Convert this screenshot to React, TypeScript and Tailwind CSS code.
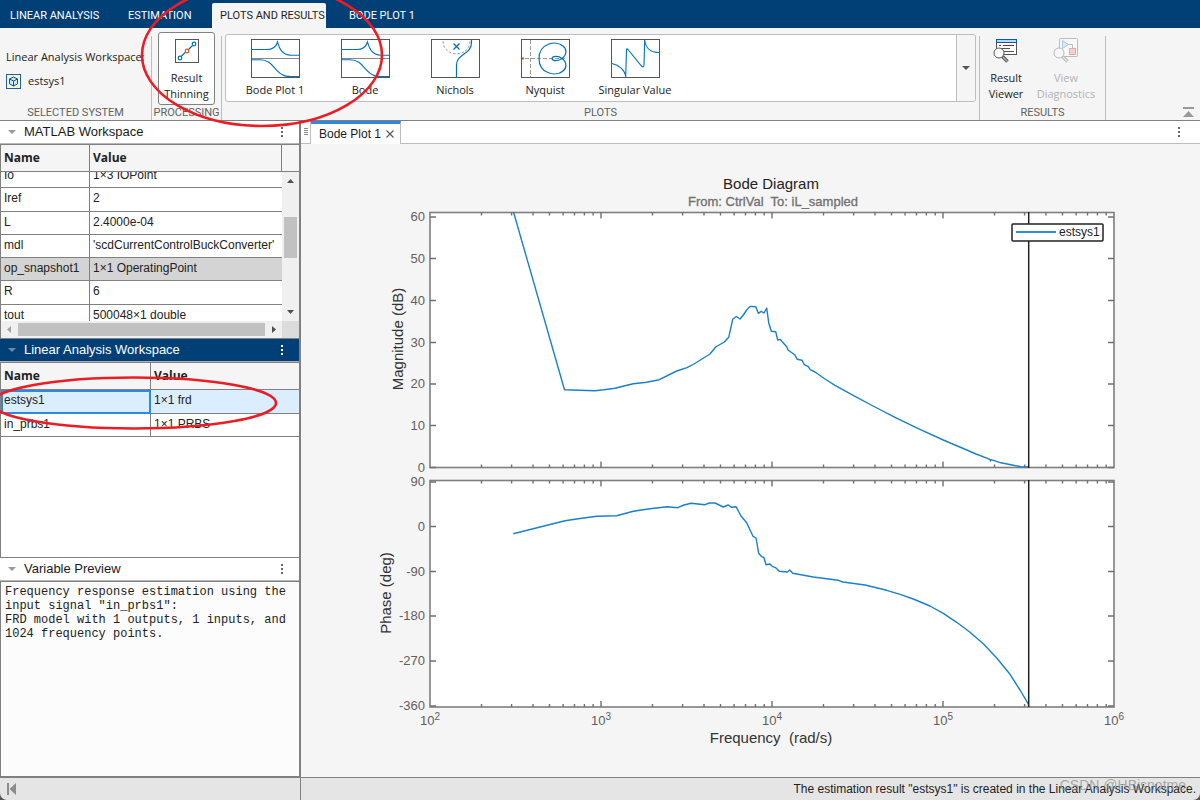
import React from "react";

const UI = "font-['Open_Sans','Noto_Sans',sans-serif]";
const CAPS = "font-['Roboto','Open_Sans',sans-serif]";
const BLUE = "#0072bd";

function ThinningIcon() {
  return (
    <svg width="24" height="24" viewBox="0 0 24 24" fill="none" aria-hidden="true">
      <rect x="0.5" y="0.5" width="23" height="23" fill="#fff" stroke="#555" />
      <path d="M6 17.5 L10.5 13.3 M13.5 10.5 L17.5 6.5" stroke={BLUE} strokeWidth="1.2" />
      <circle cx="5" cy="19" r="1.8" stroke={BLUE} strokeWidth="1.2" />
      <circle cx="12" cy="12" r="1.8" stroke="#d95319" strokeWidth="1.2" />
      <circle cx="19" cy="5" r="1.8" stroke={BLUE} strokeWidth="1.2" />
    </svg>
  );
}

function PlotFrame({ children }: { children: React.ReactNode }) {
  return (
    <svg width="49" height="39" viewBox="0 0 49 39" fill="none" aria-hidden="true">
      <rect x="0.5" y="0.5" width="48" height="38" fill="#fff" stroke="#555" />
      {children}
    </svg>
  );
}

function BodeIcon() {
  return (
    <PlotFrame>
      <path d="M1 19.5 H48" stroke="#888" />
      <path d="M1 10.5 H16 C21 10.5 25 8 26.5 3 C28 8 30 16 40 16.3 H48" stroke={BLUE} strokeWidth="1.1" />
      <path d="M1 20.8 H9 C22 21 22 31 32 36 C34 37.4 36 37.5 40 37.5 H48" stroke={BLUE} strokeWidth="1.1" />
    </PlotFrame>
  );
}

function NicholsIcon() {
  return (
    <PlotFrame>
      <path d="M12 2 C12 19 39 19 39 2" stroke="#999" strokeDasharray="2.5 1.8" />
      <path d="M22.5 4.5 L28.5 10.5 M28.5 4.5 L22.5 10.5" stroke={BLUE} strokeWidth="1.3" />
      <path d="M40.5 1 V4 C40.5 15 25.5 15 25.5 26 V38" stroke={BLUE} strokeWidth="1.2" />
    </PlotFrame>
  );
}

function NyquistIcon() {
  return (
    <PlotFrame>
      <path d="M9.5 1 V38" stroke="#999" strokeDasharray="4 2" />
      <path d="M4 19.5 H46" stroke="#999" strokeDasharray="4 2" />
      <path d="M1 19.5 H3" stroke="#d95319" strokeWidth="2" />
      <path
        d="M41 19.5 C38 17 31 16.5 31 19.5 C31 22.5 38 22 41 19.5 C46 16 46 10 42 7 C35 1 18 4 18 19.5 C18 35 35 38 42 32 C46 29 46 23 41 19.5"
        stroke={BLUE}
        strokeWidth="1.2"
      />
    </PlotFrame>
  );
}

function SingularIcon() {
  return (
    <PlotFrame>
      <path
        d="M1 24.5 C8 26 14 31 14.7 38 L15.5 11 Q15.6 9 17 10.5 L30.5 27 Q32.8 29 33 26 L33.7 1 C34.5 9 40 13.5 48 13.5"
        stroke={BLUE}
        strokeWidth="1.1"
      />
    </PlotFrame>
  );
}

function ResultViewerIcon() {
  return (
    <svg width="26" height="26" viewBox="0 0 26 26" fill="none" aria-hidden="true">
      <rect x="3.5" y="1.5" width="20" height="15" fill="#fff" stroke="#555" />
      <rect x="3.5" y="1.5" width="20" height="3" fill="#b4dcf5" stroke="#0b5aa8" />
      <path d="M6 7.5 H8 M10 7.5 H21" stroke="#9b1f2b" />
      <path d="M7 10.5 H17 M11 13.5 H21" stroke="#555" />
      <path d="M9.5 18.5 L14.5 23.5" stroke="#555" strokeWidth="3.4" />
      <path d="M10 19 L14.2 23.2" stroke="#bbb" strokeWidth="1.3" />
      <circle cx="6" cy="15" r="5" fill="#fff" stroke="#555" />
    </svg>
  );
}

function DiagnosticsIcon() {
  return (
    <svg width="26" height="26" viewBox="0 0 26 26" fill="none" aria-hidden="true">
      <rect x="6.5" y="0.5" width="18" height="18" rx="1" fill="#f8f8f8" stroke="#bbb" />
      <path d="M16 6.5 H19.5 V10" stroke="#bbb" />
      <path d="M9.5 2.5 V10.5 L15.5 6.5 Z" fill="#dbe9f7" stroke="#a5c8e8" />
      <rect x="16.5" y="10.5" width="6" height="6" fill="#f5cfcf" stroke="#e8a8a8" />
      <path d="M9.5 18.5 L14.5 23.5" stroke="#bbb" strokeWidth="3.4" />
      <path d="M10 19 L14.2 23.2" stroke="#e4e4e4" strokeWidth="1.3" />
      <circle cx="6" cy="15" r="5" fill="#f8f8f8" stroke="#bbb" />
    </svg>
  );
}

function CubeIcon() {
  return (
    <svg width="15" height="15" viewBox="0 0 15 15" fill="none" aria-hidden="true">
      <rect x="0.5" y="0.5" width="14" height="14" fill="#fdf3c4" stroke="#1a62ad" />
      <path d="M7.5 3 L11.5 5 V9.8 L7.5 12 L3.5 9.8 V5 Z" fill="#cfe8fa" stroke="#0b4f96" />
      <path d="M3.5 5 L7.5 7 L11.5 5 M7.5 7 V12" stroke="#0b4f96" />
    </svg>
  );
}

function Dots({ label, light }: { label: string; light?: boolean }) {
  return (
    <button type="button" aria-label={label} className="flex h-4 w-4 items-center justify-center">
      <svg width="2" height="12" viewBox="0 0 2 12" fill={light ? "#fff" : "#666"} aria-hidden="true">
        <rect width="2" height="2" y="1" />
        <rect width="2" height="2" y="5" />
        <rect width="2" height="2" y="9" />
      </svg>
    </button>
  );
}

function PanelHeader({ title, active }: { title: string; active?: boolean }) {
  return (
    <div
      className={
        active
          ? "flex h-[23px] shrink-0 items-center border-b border-[#b0b0b0] bg-[#004077] pr-[9px] pl-2 text-white"
          : "flex h-[23px] shrink-0 items-center border-b border-[#b8b8b8] bg-white pr-[9px] pl-2 text-[#1a1a1a]"
      }
    >
      <svg width="8" height="4" viewBox="0 0 8 4" fill={active ? "#6b8aa8" : "#999"} aria-hidden="true">
        <path d="M0 0 H8 L4 4 Z" />
      </svg>
      <h2 className="flex-1 pl-2 text-[13px] leading-4">{title}</h2>
      <Dots label={title + " options"} light={active} />
    </div>
  );
}

function RibbonSection({ title, className, children }: { title: string; className: string; children: React.ReactNode }) {
  return (
    <section className={"flex flex-col " + className}>
      <div className="flex-1">{children}</div>
      <h2 className={"h-[14px] text-center text-[11px] leading-[14px] whitespace-nowrap text-[#616161] " + CAPS}>{title}</h2>
    </section>
  );
}

const tabs = [
  { name: "LINEAR ANALYSIS", cls: "w-[118px] pl-[10px] text-white" },
  { name: "ESTIMATION", cls: "w-[94px] pl-[10px] text-white" },
  { name: "PLOTS AND RESULTS", cls: "w-[114px] rounded-t-[2px] bg-[#f5f5f5] pl-2 text-[#1f1f1f]" },
  { name: "BODE PLOT 1", cls: "w-[110px] pl-[23px] text-white" },
];

const gallery = [
  { name: "Bode Plot 1", icon: <BodeIcon /> },
  { name: "Bode", icon: <BodeIcon /> },
  { name: "Nichols", icon: <NicholsIcon /> },
  { name: "Nyquist", icon: <NyquistIcon /> },
  { name: "Singular Value", icon: <SingularIcon /> },
];

const variables = [
  { name: "Iref", value: "2", cls: "h-6 bg-white" },
  { name: "L", value: "2.4000e-04", cls: "h-[23px] bg-white" },
  { name: "mdl", value: "'scdCurrentControlBuckConverter'", cls: "h-[23px] bg-white" },
  { name: "op_snapshot1", value: "1×1 OperatingPoint", cls: "h-[23px] bg-[#d4d4d4]" },
  { name: "R", value: "6", cls: "h-6 bg-white" },
];

function Ribbon() {
  return (
    <header className={UI}>
      <nav className="flex h-7 items-end bg-[#004077]">
        {tabs.map((t) => (
          <button key={t.name} type="button" className={"h-[25px] text-left text-[11px] leading-6 whitespace-nowrap " + CAPS + " " + t.cls}>
            {t.name}
          </button>
        ))}
      </nav>
      <div className="flex h-[93px] border-b border-[#808080] bg-[#f5f5f5] pt-2 text-[11px] text-[#222]">
        <RibbonSection title="SELECTED SYSTEM" className="w-[152px] border-r border-[#bdbdbd]">
          <div className="flex flex-col gap-2 pt-[13px] pl-[6px]">
            <span className="leading-4 whitespace-nowrap">Linear Analysis Workspace:</span>
            <span className="flex items-center gap-[7px] leading-4">
              <CubeIcon />
              estsys1
            </span>
          </div>
        </RibbonSection>
        <RibbonSection title="PROCESSING" className="-mt-1 w-[69px]">
          <button
            type="button"
            className="mx-auto flex h-[73px] w-[57px] flex-col items-center rounded-[3px] border border-[#808080] bg-white pt-[6px] leading-4"
          >
            <ThinningIcon />
            <span className="pt-[7px]">
              Result
              <br />
              Thinning
            </span>
          </button>
        </RibbonSection>
        <RibbonSection title="PLOTS" className="min-w-0 flex-1 border-x border-[#bdbdbd] px-[3px]">
          <div className="-mt-[2px] flex h-[68px] rounded-[3px] border border-[#bdbdbd] bg-white">
            <div className="flex flex-1 overflow-hidden pl-1">
              {gallery.map((g) => (
                <button key={g.name} type="button" className="flex w-[90px] shrink-0 flex-col items-center gap-1 pt-1 leading-4">
                  {g.icon}
                  <span>{g.name}</span>
                </button>
              ))}
            </div>
            <button
              type="button"
              aria-label="More plots"
              className="flex w-[19px] items-center justify-center rounded-r-[3px] border-l border-[#bdbdbd] bg-[#f5f5f5]"
            >
              <svg width="8" height="4" viewBox="0 0 8 4" fill="#555" aria-hidden="true">
                <path d="M0 0 H8 L4 4 Z" />
              </svg>
            </button>
          </div>
        </RibbonSection>
        <RibbonSection title="RESULTS" className="w-[126px] border-r border-[#bdbdbd]">
          <div className="flex leading-4">
            <button type="button" className="flex w-[52px] flex-col items-center gap-[6px] pt-[2px]">
              <ResultViewerIcon />
              <span>
                Result
                <br />
                Viewer
              </span>
            </button>
            <button type="button" disabled className="flex w-[68px] flex-col items-center gap-[6px] pt-[2px] text-[#b3b3b3]">
              <DiagnosticsIcon />
              <span>
                View
                <br />
                Diagnostics
              </span>
            </button>
          </div>
        </RibbonSection>
        <div className="flex w-[94px] items-end justify-end pr-[6px] pb-[2px]">
          <button type="button" aria-label="Collapse toolstrip">
            <svg width="11" height="11" viewBox="0 0 11 11" fill="#999" className="block" aria-hidden="true">
              <path d="M0 0 H11 V2 H0 Z M5.5 4 L11 10 H0 Z" />
            </svg>
          </button>
        </div>
      </div>
    </header>
  );
}

const th = "border-b border-[#808080] pl-[3px] text-left font-bold";

function MatlabWorkspace() {
  return (
    <section>
      <PanelHeader title="MATLAB Workspace" />
      <div className="border-y border-l border-[#808080]">
        <div className="flex">
          <table className="flex-1 table-fixed border-separate border-spacing-0 text-xs leading-4">
            <thead className={"bg-[#f5f5f5] " + UI}>
              <tr className="h-[27px]">
                <th className={th + " w-[89px] border-r"}>Name</th>
                <th className={th + " border-r"}>Value</th>
              </tr>
            </thead>
            <tbody>
              <tr>
                <td className="border-r border-b border-[#808080] pl-[3px]">
                  <div className="flex h-[15px] items-end overflow-hidden pb-1">Io</div>
                </td>
                <td className="border-b border-[#808080] pl-[3px]">
                  <div className="flex h-[15px] items-end overflow-hidden pb-1">1×3 IOPoint</div>
                </td>
              </tr>
              {variables.map((v) => (
                <tr key={v.name} className={v.cls}>
                  <td className="border-r border-b border-[#808080] pt-[2px] pl-[3px] align-top">{v.name}</td>
                  <td className="border-b border-[#808080] pt-[2px] pl-[3px] align-top whitespace-nowrap">{v.value}</td>
                </tr>
              ))}
              <tr>
                <td className="border-r border-[#808080] pl-[3px]">
                  <div className="h-4 overflow-hidden pt-[2px]">tout</div>
                </td>
                <td className="pl-[3px]">
                  <div className="h-4 overflow-hidden pt-[2px]">500048×1 double</div>
                </td>
              </tr>
            </tbody>
          </table>
          <div className="flex w-[17px] flex-col">
            <div className="h-[27px] border-b border-[#808080] bg-[#f5f5f5]" />
            <div className="flex flex-1 flex-col items-center justify-between bg-[#f0f0f0] py-[7px]">
              <svg width="7" height="4" viewBox="0 0 7 4" fill="#505050" aria-hidden="true">
                <path d="M0 4 L3.5 0 L7 4 Z" />
              </svg>
              <div className="mt-2 h-[41px] w-[13px] bg-[#c1c1c1]" />
              <div />
              <svg width="7" height="4" viewBox="0 0 7 4" fill="#505050" aria-hidden="true">
                <path d="M0 0 H7 L3.5 4 Z" />
              </svg>
            </div>
          </div>
        </div>
        <div className="flex h-[17px] bg-[#f0f0f0]">
          <div className="flex flex-1 items-center gap-[7px] pr-[6px] pl-[6px]">
            <svg width="4" height="7" viewBox="0 0 4 7" fill="#a3a3a3" aria-hidden="true">
              <path d="M4 0 V7 L0 3.5 Z" />
            </svg>
            <div className="h-[13px] flex-1 bg-[#c1c1c1]" />
            <svg width="4" height="7" viewBox="0 0 4 7" fill="#505050" aria-hidden="true">
              <path d="M0 0 V7 L4 3.5 Z" />
            </svg>
          </div>
          <div className="w-[17px] bg-[#dcdcdc]" />
        </div>
      </div>
    </section>
  );
}

function LinearWorkspace() {
  return (
    <section className="flex h-[219px] flex-col">
      <PanelHeader title="Linear Analysis Workspace" active />
      <div className="flex-1 border-y border-l border-[#808080] bg-white">
        <table className="w-full table-fixed border-separate border-spacing-0 text-xs leading-4">
          <thead className={"bg-[#f5f5f5] " + UI}>
            <tr className="h-[27px]">
              <th className={th + " w-[150px] border-r"}>Name</th>
              <th className={th}>Value</th>
            </tr>
          </thead>
          <tbody>
            <tr className="h-6 bg-[#dbeeff]">
              <td className="border-r border-b border-[#808080] pt-[2px] pl-[3px] align-top outline-2 -outline-offset-2 outline-[#2b8ae0]">estsys1</td>
              <td className="border-b border-[#808080] pt-[2px] pl-[3px] align-top">1×1 frd</td>
            </tr>
            <tr className="h-[23px]">
              <td className="border-r border-b border-[#808080] pt-[2px] pl-[3px] align-top">in_prbs1</td>
              <td className="border-b border-[#808080] pt-[2px] pl-[3px] align-top">1×1 PRBS</td>
            </tr>
          </tbody>
        </table>
      </div>
    </section>
  );
}

function VariablePreview() {
  return (
    <section className="flex flex-1 flex-col">
      <PanelHeader title="Variable Preview" />
      <pre className="flex-1 border-y border-l border-[#808080] bg-[#fcfcfc] pt-[3px] pl-1 font-['Liberation_Mono',monospace] text-xs leading-[14px] whitespace-pre-wrap text-[#222]">
        {'Frequency response estimation using the input signal "in_prbs1":\nFRD model with 1 outputs, 1 inputs, and 1024 frequency points.'}
      </pre>
    </section>
  );
}

const LEFT = 430;
const RIGHT = 1114;
const DECADE = 171;

function axisTicks(top: number, bottom: number) {
  let d = "";
  for (let e = 0; e < 4; e++) {
    for (let m = 1; m < 10; m++) {
      if (e === 0 && m === 1) continue;
      const x = (LEFT + DECADE * (e + Math.log10(m))).toFixed(1);
      const len = m === 1 ? 6 : 3;
      d += `M${x} ${top}v${len}M${x} ${bottom}v-${len}`;
    }
  }
  return d;
}

function sideTicks(ys: number[]) {
  return ys.map((y) => `M${LEFT} ${y}h6M${RIGHT} ${y}h-6`).join("");
}

const magTicks = [
  { y: 217, v: "60" },
  { y: 258.5, v: "50" },
  { y: 300.5, v: "40" },
  { y: 342.5, v: "30" },
  { y: 384, v: "20" },
  { y: 425.5, v: "10" },
  { y: 467.5, v: "0" },
];
const phaseTicks = [
  { y: 482, v: "90" },
  { y: 526.5, v: "0" },
  { y: 571.5, v: "-90" },
  { y: 616, v: "-180" },
  { y: 661, v: "-270" },
  { y: 706, v: "-360" },
];

const magnitude =
  "513.5,212 564.5,389.7 595,390.7 604,389.8 615,388.3 624,386 633.3,383.7 646.7,382.3 659.3,379.7 676.7,371 687,367.7 694,364 710,354 715.7,347 724.3,342 728.7,337.3 732.7,319.3 736.3,316.5 740,319 743.3,315 746.7,310 750,306.4 755.7,306.7 758.3,313.3 761.3,311.3 764,313 766.7,308 768.7,322.7 771.3,331.3 775.7,331.7 777.7,340 780,339.3 786.7,346.7 788,350 794.7,354.7 797.3,359.3 802,360.3 804,364.3 808.3,366.7 810.3,369.7 815,372 825,379 835,385.3 855,396.3 875,407 895,417.3 918.3,428.7 943.3,440 963.3,448.5 976,454 990,459.3 990.5,461 991,459.6 1001,462.8 1013.3,465.3 1021,466.7 1028.7,467";
const phase =
  "513.3,533.7 565,520.7 580,518.5 596.7,516.3 616.7,515.7 633.3,511.3 650,508.8 667.3,506.7 677.7,507.7 684,505 691,503.3 705,504.7 709.3,503 715,503 723.3,507 728.3,505 731.7,507.3 736,506.7 741,516 746.7,522.7 753,536.3 756,538 758.7,553.3 761.3,556.3 764,557.7 766,564.7 770,564 772.7,566.7 775.7,567.7 779.3,571.3 787.3,572 789.7,570 792.7,573.3 813.3,577 838.3,580.3 843,582 865,585 886.7,590.3 900,594.3 913.3,599 930,606 943.3,613.3 956.7,622.3 970,632.3 983.3,643.7 996.7,658 1010,674.3 1020,690 1028.7,704.7";

function BodeChart() {
  return (
    <svg viewBox="301 144 899 633" className="h-full w-full font-['Liberation_Sans',Arial,sans-serif]" role="img" aria-label="Bode Diagram">
      <text x="771" y="189" textAnchor="middle" fontSize="15" fill="#222">Bode Diagram</text>
      <text x="773" y="206" textAnchor="middle" fontSize="13" fill="#707070" stroke="#707070" strokeWidth="0.3" className="whitespace-pre">
        {"From: CtrlVal  To: iL_sampled"}
      </text>
      <g fill="#fff" stroke="#7f7f7f" strokeWidth="1.6">
        <rect x={LEFT} y="212.5" width={RIGHT - LEFT} height="255" />
        <rect x={LEFT} y="480.5" width={RIGHT - LEFT} height="226.5" />
      </g>
      <g stroke="#707070" strokeWidth="1.4">
        <path d={axisTicks(212.5, 467.5)} />
        <path d={axisTicks(480.5, 707)} />
        <path d={sideTicks(magTicks.map((t) => t.y))} />
        <path d={sideTicks(phaseTicks.map((t) => t.y))} />
      </g>
      <g fontSize="13" fill="#606060" textAnchor="end">
        {[...magTicks, ...phaseTicks].map((t) => (
          <text key={t.v + t.y} x="425" y={t.y + 4}>{t.v}</text>
        ))}
      </g>
      <g fontSize="13" fill="#606060">
        {["2", "3", "4", "5", "6"].map((p, i) => (
          <text key={p} x={420 + DECADE * i} y="725">
            10<tspan dy="-5" fontSize="10">{p}</tspan>
          </text>
        ))}
      </g>
      <g fontSize="15" fill="#333" textAnchor="middle">
        <text transform="translate(403 339) rotate(-90)">Magnitude (dB)</text>
        <text transform="translate(391 593) rotate(-90)">Phase (deg)</text>
        <text x="771" y="743" className="whitespace-pre">{"Frequency  (rad/s)"}</text>
      </g>
      <g fill="none" stroke="#1a80c8" strokeWidth="1.4" strokeLinejoin="round">
        <polyline points={magnitude} />
        <polyline points={phase} />
      </g>
      <path d="M1028.7 212V468M1028.7 480V707" stroke="#222" strokeWidth="1.5" />
      <rect x="1012" y="224" width="91" height="17" rx="1" fill="#fff" stroke="#222" strokeWidth="1.5" />
      <path d="M1016 232H1056" stroke="#2f8fd3" strokeWidth="2" />
      <text x="1059" y="236" fontSize="12" fill="#222">estsys1</text>
    </svg>
  );
}

function Document() {
  return (
    <main className="flex min-w-0 flex-1 flex-col">
      <div className="flex h-[23px] bg-white text-xs text-[#1a1a1a]">
        <div className="flex w-[10px] items-center justify-center border-r border-b border-[#bdbdbd]">
          <svg width="4" height="8" viewBox="0 0 4 8" aria-hidden="true">
            <path d="M0 0.5H4M0 2.5H4M0 4.5H4M0 6.5H4" stroke="#888" strokeWidth="1" />
          </svg>
        </div>
        <div className="flex w-[90px] items-center justify-between border-t-[3px] border-r border-t-[#2b8ae0] border-r-[#bdbdbd] pr-[6px] pl-2">
          <span className="whitespace-nowrap">Bode Plot 1</span>
          <button type="button" aria-label="Close Bode Plot 1">
            <svg width="8" height="8" viewBox="0 0 8 8" className="block" aria-hidden="true">
              <path d="M0.5 0.5 L7.5 7.5 M7.5 0.5 L0.5 7.5" stroke="#555" strokeWidth="1.1" />
            </svg>
          </button>
        </div>
        <div className="flex flex-1 items-center justify-end border-b border-[#bdbdbd] pr-[13px]">
          <Dots label="Document options" />
        </div>
      </div>
      <div className="min-h-0 flex-1 bg-[#f5f5f5]">
        <BodeChart />
      </div>
    </main>
  );
}

export default function App() {
  return (
    <div className="relative flex h-screen min-h-[800px] flex-col overflow-hidden bg-[#555] font-['Liberation_Sans',Arial,sans-serif] text-[#222]">
      <Ribbon />
      <div className="flex min-h-0 flex-1">
        <aside className="flex w-[301px] shrink-0 flex-col border-r-2 border-[#808080] bg-white">
          <MatlabWorkspace />
          <LinearWorkspace />
          <VariablePreview />
        </aside>
        <Document />
      </div>
      <footer className="flex h-[23px] shrink-0 rounded-b-[7px] border-t border-[#808080] bg-[#e5e5e5] text-xs leading-[22px]">
        <div className="flex w-[301px] items-center border-r border-[#808080] pl-[7px]">
          <button type="button" aria-label="Collapse side panel">
            <svg width="9" height="12" viewBox="0 0 9 12" fill="#8c8c8c" className="block" aria-hidden="true">
              <path d="M0 0H2V12H0Z M9 0V12L2.5 6Z" />
            </svg>
          </button>
        </div>
        <p className="relative flex-1 pr-1 text-right whitespace-nowrap">
          The estimation result "estsys1" is created in the Linear Analysis Workspace.
          <span className="absolute -top-1 right-[14px] text-sm leading-[22px] text-[#8c8c8c]/70">CSDN @HBisnotme</span>
        </p>
      </footer>
      <svg className="pointer-events-none absolute top-0 left-0" width="400" height="440" viewBox="0 0 400 440" fill="none" aria-hidden="true">
        <ellipse cx="262" cy="55" rx="120" ry="71" stroke="#ed1c24" strokeWidth="2.6" />
        <ellipse cx="134" cy="403" rx="142" ry="25.5" stroke="#ed1c24" strokeWidth="2.6" />
      </svg>
    </div>
  );
}
